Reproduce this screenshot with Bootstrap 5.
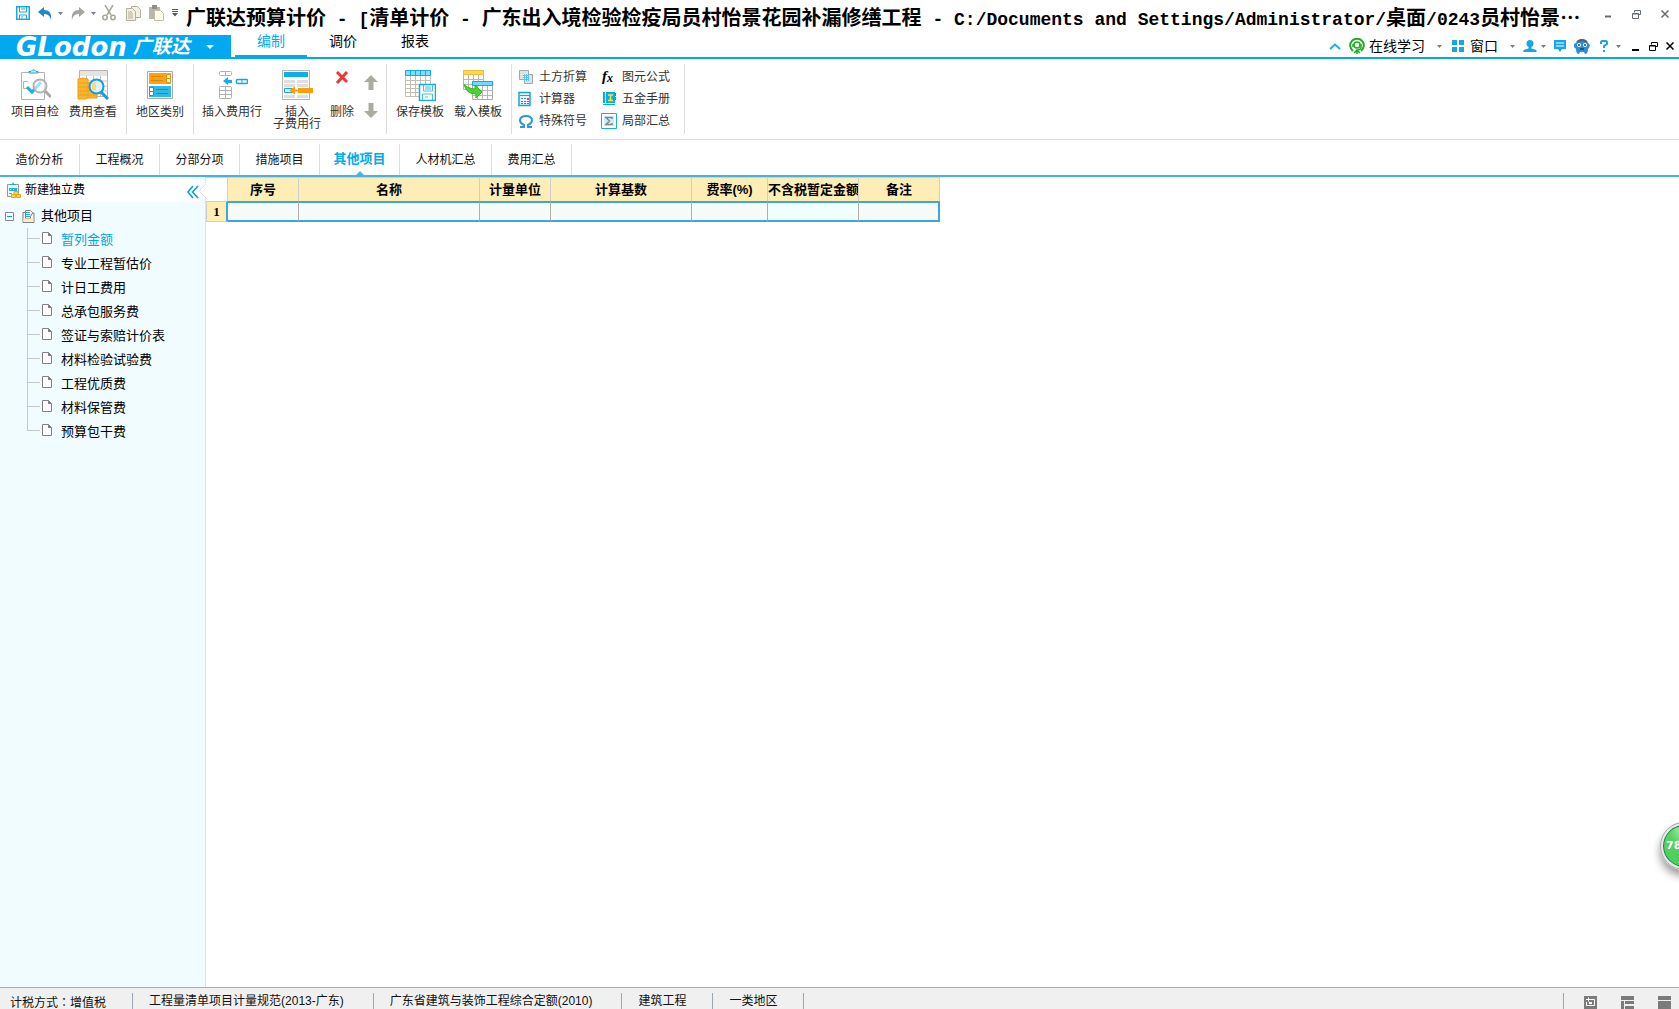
<!DOCTYPE html>
<html lang="zh-CN">
<head>
<meta charset="utf-8">
<meta name="viewport" content="width=device-width, initial-scale=1">
<title>广联达预算计价</title>
<link href="https://cdn.jsdelivr.net/npm/bootstrap@5.3.0/dist/css/bootstrap.min.css" rel="stylesheet">
<style>
:root{--sky:#03a9f0;--line:#dedede}
body{font-family:"Liberation Sans","Noto Sans CJK SC",sans-serif;font-size:12px;line-height:16px;color:#000;background:#fff;overflow:hidden}
svg{display:block;flex:none}
button{font:inherit;color:inherit;background:none;border:0;padding:0;flex:none}
a{color:inherit;text-decoration:none}
.sp-6{margin-left:6px}.sp-10{margin-left:10px}.sp-12{margin-left:12px}
/* title bar */
.titlebar{height:35px;padding:0 10px 0 16px}
.quick{width:170px;height:26px}
.caption-text{font:bold 20px/34px "Liberation Mono","Noto Sans CJK SC",monospace;white-space:nowrap}
.caption-text span{font-size:18px}
.caption-text .dots{font-family:"Noto Sans CJK SC",sans-serif;font-size:20px}
.winbtns{color:#666b75;height:28px;gap:20px}
/* brand and main tabs */
.brandrow{height:24px;border-bottom:2px solid var(--sky)}
.brand{width:231px;height:24px;background:var(--sky);color:#fff;padding-left:16px}
.brand-latin{font:italic bold 26px/24px "DejaVu Sans",sans-serif}
.brand-cn{font-size:19px;line-height:24px;font-style:italic;font-weight:700;margin-left:6px}
.maintabs{margin-left:4px;height:22px}
.maintabs a{width:72px;height:22px;font-size:14px;line-height:12px;text-align:center;border-bottom:2px solid transparent}
.maintabs a.active{color:var(--sky);border-color:var(--sky)}
.tools{font-size:14px;padding-right:5px;height:22px}
/* ribbon */
.ribbon{height:81px;padding-top:5px;border-bottom:1px solid var(--line);color:#333}
.rgroup{height:70px;border-right:1px solid var(--line);padding:0 4px}
.rgroup.lead-in{padding-left:6px}
.rgroup.tight{padding:0 2px}
.rbtn{width:58px;padding-top:5px;display:flex;flex-direction:column;align-items:center;line-height:12px;gap:5px;white-space:nowrap}
.rbtn.wide{width:72px}.rbtn.slim{width:32px}
.arrows{width:26px;padding-top:11px;gap:13px}
.minis{grid-template-columns:83px 72px;grid-auto-rows:22px;padding:2px 4px 0 6px;width:173px}
.minis button{display:flex;align-items:center;gap:5px;text-align:left}
/* page tabs */
.pagetabs{height:37px;padding-top:4px;border-bottom:2px solid #45b4e2}
.pagetabs a{width:80px;height:31px;line-height:33px;text-align:center;border-right:1px solid var(--line);position:relative;color:#111}
.pagetabs a.long{width:92px}
.pagetabs a.active{color:var(--sky);font-weight:700;font-size:13px;line-height:30px}
.pagetabs a.active::after{content:"";position:absolute;left:36px;bottom:0;border:4px solid transparent;border-top:0;border-bottom-color:#45b4e2}
/* side panel */
.side{width:206px;background:#f0fcff;border-right:1px solid #dbe3e5;position:relative}
.sidehead{height:25px;background:#fff;margin-right:5px;padding:0 1px 0 6px}
.notch{position:absolute;right:-1px;top:6px}
.tree{font-size:13px;line-height:24px;list-style:none;margin:0;padding:0}
.root{height:24px;margin-top:2px;padding-left:5px}
.leaves{list-style:none;margin:0 0 0 27px;padding:0}
.leaves li{height:24px;display:flex;align-items:center;background:linear-gradient(#c8c8c8,#c8c8c8) 0 0/1px 100% no-repeat,linear-gradient(#c8c8c8,#c8c8c8) 0 10px/13px 1px no-repeat}
.leaves li:last-child{background-size:1px 10px,13px 1px}
.leaves svg{margin:0 9px 4px 15px}
.leaves .active{color:#00a5dc}
/* data grid */
.datagrid{table-layout:fixed;width:734px;border-collapse:separate;border-spacing:0;font-size:13px}
.datagrid th,.datagrid td{padding:0;text-align:center;white-space:nowrap;overflow:hidden;line-height:20px}
.datagrid thead th{height:24px;background:#ffedb6;border-top:1px solid #cfcfcf;border-right:1px solid #cfcfcf;color:#000}
.datagrid thead td{border-top:1px solid #cfcfcf;border-right:1px solid #cfcfcf}
.datagrid tbody td{height:21px;background:#f6fbfa;border-top:2px solid #3ba9d3;border-bottom:2px solid #3ba9d3;border-right:1px solid #adadad}
.datagrid tbody td:last-child{border-right:2px solid #3ba9d3}
.datagrid tbody td.hot{background:#f1fffc}
.datagrid tbody th{height:21px;line-height:16px;background:#ffedb6;border:1px solid #cfcfcf;border-right:2px solid #3ba9d3;font-family:"Liberation Serif",serif}
/* status bar */
.status{height:22px;background:#f0f0f0;border-top:1px solid #ababab;color:#111}
.status .cell{border-right:1px solid #9aa7b3;height:16px;margin-top:5px;line-height:17px;padding:0 26px 0 16px;white-space:nowrap}
.status .first{padding-left:10px}
.status .norm{padding-right:29px}
.colon{font-family:"Noto Sans CJK TC",sans-serif}
.ball{position:absolute;right:-29px;top:822px;width:48px;height:48px;border-radius:50%;border:3px solid #e8e8e8;outline:1px solid #aaa;outline-offset:-1px;background:radial-gradient(circle at 50% 10%,#b5f0b0 0,#58d060 35%,#48cc5c 100%);box-shadow:0 6px 9px rgba(0,0,0,.4),inset 0 0 0 1px #16804a;color:#fff;font:bold 11px/40px "DejaVu Sans",sans-serif;text-align:left;padding-left:3px}
</style>
<script src="https://cdn.jsdelivr.net/npm/bootstrap@5.3.0/dist/js/bootstrap.bundle.min.js"></script>
</head>
<body>
<svg width="0" height="0" class="position-absolute" aria-hidden="true">
  <symbol id="caret" viewBox="0 0 5 3"><path d="M0 0h5L2.500 3z" fill="#777b88"/></symbol>
  <symbol id="page" viewBox="0 0 10 12"><path d="M.5.5h6l3 3v8h-9z" fill="#fff" stroke="#808080"/><path d="M6 0v4h4z" fill="#808080"/></symbol>
  <symbol id="restore" viewBox="0 0 9 9"><path d="M2.500 2.500v-2h6v4h-2M.5 3.500h6v5h-6zM.5 4h6" fill="none" stroke="currentColor"/></symbol>
  <symbol id="cross" viewBox="0 0 8 8"><path d="M.5.5l7 7M7.500.5l-7 7" stroke="currentColor" stroke-width="1.500"/></symbol>
  <symbol id="arrow" viewBox="0 0 14 15"><path d="M7 0l7 7H9.500v8h-5V7H0z" fill="#acab9f"/></symbol>
  <symbol id="floppy" viewBox="0 0 14 14"><path d="M.75.75h12.500v12.500H.75z" fill="#fff" stroke="#19a7dd" stroke-width="1.500"/><path d="M3.500 1v5h7V1M3.500 13V9h7v4M5 3h4M5 11h2" fill="none" stroke="#19a7dd"/></symbol>
</svg>
<div class="d-flex flex-column vh-100 position-relative overflow-hidden">
  <header>
    <div class="titlebar d-flex align-items-start">
      <div class="quick d-flex align-items-center flex-shrink-0">
        <button aria-label="保存"><svg width="14" height="14"><use href="#floppy"/></svg></button>
        <button class="ms-2" aria-label="撤销"><svg width="14" height="13" viewBox="0 0 14 13"><path d="M0 5l6-5v3c5 0 8 3 7 10-1-4-3-6-7-6v3z" fill="#2187c8"/></svg></button>
        <button class="sp-6" aria-label="撤销列表"><svg width="5" height="3"><use href="#caret"/></svg></button>
        <button class="ms-2" aria-label="重做"><svg width="14" height="13" viewBox="0 0 14 13"><path d="M14 5L8 0v3C3 3 0 6 1 13c1-4 3-6 7-6v3z" fill="#a4a4a0"/></svg></button>
        <button class="sp-6" aria-label="重做列表"><svg width="5" height="3"><use href="#caret"/></svg></button>
        <button class="sp-6" aria-label="剪切"><svg width="14" height="16" viewBox="0 0 14 16" fill="none" stroke="#a9a59b" stroke-width="1.500"><path d="M3 0l6 10M11 0L5 10"/><circle cx="3" cy="12.500" r="2.200"/><circle cx="11" cy="12.500" r="2.200"/></svg></button>
        <button class="sp-10" aria-label="复制"><svg width="15" height="15" viewBox="0 0 15 15" fill="#f3f0df" stroke="#b5b09c"><path d="M5.500.5h6l3 3v8h-9z"/><path d="M.5 2.500h6l3 3v9h-9z"/><path d="M2 6h4M2 8h5M2 10h5M2 12h5"/></svg></button>
        <button class="ms-2" aria-label="粘贴"><svg width="15" height="16" viewBox="0 0 15 16"><path d="M0 2h11v12H0z" fill="#b9b6aa"/><path d="M3 0h5v4H3z" fill="#918f85"/><path d="M5.500 5.500h6l3 3v7h-9z" fill="#fffdeb" stroke="#c4bfa5"/></svg></button>
        <button class="ms-2" aria-label="更多"><svg width="6" height="8" viewBox="0 0 6 8"><path d="M0 0h6v1H0zM0 2h6v1H0zM0 4h6L3 7.500z" fill="#555a66"/></svg></button>
      </div>
      <div class="caption-text">广联达预算计价<span> - [</span>清单计价<span> - </span>广东出入境检验检疫局员村怡景花园补漏修缮工程<span> - C:/Documents and Settings/Administrator/</span>桌面<span>/0243</span>员村怡景<span class="dots">…</span></div>
      <div class="winbtns d-flex align-items-center ms-auto">
        <button aria-label="最小化"><svg width="8" height="8" viewBox="0 0 8 8"><path d="M1 5.500h6v2H1z" fill="currentColor"/></svg></button>
        <button aria-label="还原"><svg width="9" height="9"><use href="#restore"/></svg></button>
        <button aria-label="关闭"><svg width="8" height="8"><use href="#cross"/></svg></button>
      </div>
    </div>
    <div class="brandrow d-flex">
      <button class="brand d-flex"><span class="brand-latin">GLodon</span><span class="brand-cn">广联达</span><svg class="ms-3 mt-2" width="8" height="8" viewBox="0 0 8 8"><path d="M0 2h8L4 6z" fill="#fff"/></svg></button>
      <nav class="maintabs d-flex"><a href="#" class="active">编制</a><a href="#">调价</a><a href="#">报表</a></nav>
      <div class="tools d-flex align-items-center ms-auto">
        <button aria-label="收起"><svg width="12" height="7" viewBox="0 0 12 7"><path d="M1 6l5-4.500L11 6" fill="none" stroke="#16aef0" stroke-width="2"/></svg></button>
        <button class="d-flex align-items-center ms-2"><svg width="16" height="16" viewBox="0 0 16 16" fill="none" stroke="#20ac23"><path d="M4 13A6.800 6.800 0 1 1 12 13" stroke-width="2"/><circle cx="8" cy="7" r="3" stroke-width="1.500"/><path d="M4 6v3M12 6v3c0 3-2 3-4 3v4M5 15l3-3 3 3" stroke-width="1.500"/></svg><span class="ms-1">在线学习</span><svg class="sp-12" width="5" height="3"><use href="#caret"/></svg></button>
        <button class="d-flex align-items-center sp-10"><svg width="12" height="12" viewBox="0 0 12 12"><path d="M0 0h5v5H0zM7 0h5v5H7zM0 7h5v5H0zM7 7h5v5H7z" fill="#16a4ea"/></svg><span class="sp-6">窗口</span><svg class="sp-12" width="5" height="3"><use href="#caret"/></svg></button>
        <button class="d-flex align-items-center ms-2" aria-label="用户"><svg width="14" height="12" viewBox="0 0 14 12" fill="#16a4ea"><circle cx="7" cy="3.500" r="3.500"/><path d="M5.500 6h3v2.500L13.500 10v2H.5v-2l5-1.500z"/></svg><svg class="ms-1" width="5" height="3"><use href="#caret"/></svg></button>
        <button class="ms-2" aria-label="消息"><svg width="12" height="12" viewBox="0 0 12 12"><path d="M0 0h12v9H8l-2 3-2-3H0z" fill="#16a4ea"/><path d="M2 3h8M2 6h8" stroke="#fff"/></svg></button>
        <button class="ms-2" aria-label="助手"><svg width="16" height="15" viewBox="0 0 16 15"><path d="M2 4Q4 0 8 0t6 4l2 2-1 3-1 1q0 5-3 5l-1-2H6l-1 2q-3 0-3-5L0 8V5z" fill="#288fdb"/><path d="M3 3q5-4 10 0" fill="none" stroke="#575c76" stroke-width="2"/><circle cx="5" cy="6" r="2" fill="#fff"/><circle cx="11" cy="6" r="2" fill="#fff"/><path d="M5 5v2M11 5v2M6 10h4" stroke="#25436a" stroke-width="1.500"/></svg></button>
        <button class="sp-10" aria-label="帮助"><svg width="8" height="12" viewBox="0 0 8 12"><path d="M1 4V2l1-1h4l1 1v2L4 6v2M4 10v2" fill="none" stroke="#16a4ea" stroke-width="2"/></svg></button>
        <button class="ms-2" aria-label="帮助列表"><svg width="5" height="3"><use href="#caret"/></svg></button>
        <button class="sp-10" aria-label="最小化窗口"><svg width="8" height="9" viewBox="0 0 8 9"><path d="M1 7h7v2H1z"/></svg></button>
        <button class="sp-10" aria-label="还原窗口"><svg width="9" height="9"><use href="#restore"/></svg></button>
        <button class="ms-2" aria-label="关闭窗口"><svg width="8" height="8"><use href="#cross"/></svg></button>
      </div>
    </div>
  </header>

  <div class="ribbon d-flex">
    <div class="rgroup lead-in d-flex">
      <button class="rbtn"><svg width="32" height="32" viewBox="0 0 32 32" fill="none"><path d="M2.500 3.500h23v27h-23z" fill="#fff" stroke="#b3b3b3"/><path d="M10 4h9V2.500h-2L15.500 1h-2L12 2.500h-2z" fill="#d5f3fd" stroke="#12a9df"/><path d="M9 12.500H4.500v7H9" stroke="#b3b3b3"/><path d="M8 18l5 5 9-10" stroke="#13aeee" stroke-width="3"/><circle cx="21" cy="17" r="6.500" fill="#fff" fill-opacity=".6" stroke="#b0b0b5" stroke-width="2"/><path d="M26 22l6 6" stroke="#a7a7ac" stroke-width="3"/></svg><span>项目自检</span></button>
      <button class="rbtn"><svg width="32" height="32" viewBox="0 0 32 32" fill="none"><path d="M2.500 1.500h28v26h-28z" fill="#fff" stroke="#b3b3b3"/><path d="M3 2h27v5H3z" fill="#e4e4e4"/><path d="M3 12h27M3 17h27M3 22h27M9.500 7v20M16.500 7v20M23.500 7v20" stroke="#c4c4c4"/><path d="M1 10l5-1 5 1v4l5-1 4 1v15H11l-3 1H1z" fill="#fdb52b" stroke="#ef9b12"/><path d="M1 14h10M1 18h19M1 22h19M1 26h19M11 14v15" stroke="#eda01f"/><circle cx="19.500" cy="17.500" r="7" fill="#ddf4fc" stroke="#139fdd" stroke-width="2"/><path d="M15 14l4-1v9l-4-1z" fill="#ffd68a"/><path d="M24 23l7 7" stroke="#139fdd" stroke-width="3"/></svg><span>费用查看</span></button>
    </div>
    <div class="rgroup d-flex">
      <button class="rbtn"><svg width="32" height="32" viewBox="0 0 32 32"><path d="M3.500 2.500h25v27h-25z" fill="#fff" stroke="#aaa"/><path d="M5 4h22v11H5z" fill="#ffa00c"/><path d="M7 7.500h12M7 11.500h12" stroke="#d9870b"/><path d="M22.500 5.500h4v4h-4zM22.500 9.500h4v4h-4z" fill="#fff" stroke="#e99208"/><path d="M5 17h22v11H5z" fill="#2fb9e7"/><path d="M12 20.500h12M12 24.500h12" stroke="#1792bd"/><path d="M5.500 18.500h4v4h-4zM5.500 22.500h4v4h-4z" fill="#fff" stroke="#159bce"/></svg><span>地区类别</span></button>
    </div>
    <div class="rgroup tight d-flex">
      <button class="rbtn wide"><svg width="32" height="32" viewBox="0 0 32 32" fill="#fff" stroke="#b0b0b0"><rect x="3.500" y="2.500" width="12" height="4" rx="1"/><path d="M9.500 2.500v4"/><rect x="3.500" y="17.500" width="12" height="12" rx="1"/><path d="M9.500 17.500v12M3.500 21.500h12M3.500 25.500h12"/><path d="M7 12l5-4v3h4v3h-4v2z" fill="#11aef0" stroke="none"/><rect x="20.500" y="10.500" width="11" height="4" rx="1" stroke="#0baae8" stroke-width="1.500"/><path d="M26 10.500v4" stroke="#0baae8"/></svg><span>插入费用行</span></button>
      <button class="rbtn"><svg width="32" height="32" viewBox="0 0 32 32"><path d="M1.500 1.500h27v29h-27z" fill="#fff" stroke="#b3b3b3"/><path d="M3 3h24v5H3z" fill="#08afe9"/><path d="M3 11h11v3H3zM16 11h11v3H16zM3 15h11v3H3zM16 15h11v3H16zM3 26h11v3H3zM16 26h11v3H16z" fill="#dedede"/><path d="M3.500 19.500h8v4h-8z" fill="#d9f5ff" stroke="#12a7dd"/><path d="M8 21.500l6-4v3h4v2h-4v3zM17 19h15v5H17z" fill="#ff9e08"/></svg><span>插入<br>子费用行</span></button>
      <button class="rbtn slim"><svg width="14" height="32" viewBox="0 0 14 32"><path d="M2 3l10 10M12 3L2 14" stroke="#ee3737" stroke-width="3"/></svg><span>删除</span></button>
      <div class="arrows d-flex flex-column align-items-center"><button aria-label="上移"><svg width="14" height="15"><use href="#arrow"/></svg></button><button aria-label="下移"><svg width="14" height="15" viewBox="0 0 14 15"><path d="M7 15l7-7H9.500V0h-5v8H0z" fill="#acab9f"/></svg></button></div>
    </div>
    <div class="rgroup d-flex">
      <button class="rbtn"><svg width="32" height="32" viewBox="0 0 32 32" fill="none"><path d="M1.500 1.500h25v26h-25z" fill="#fff" stroke="#c5beb2"/><path d="M1 1h26v6H1z" fill="#89dcfa"/><path d="M1.500 1.500h25v5h-25zM6.500 2v5M11.500 2v5M16.500 2v5M21.500 2v5" stroke="#0aafe7"/><path d="M6.500 7v20M11.500 7v20M16.500 7v20M21.500 7v20M1 11.500h25M1 15.500h25M1 19.500h25M1 23.500h25" stroke="#c5beb2"/><path d="M15.500 15.500h16v16h-16z" fill="#fff" stroke="#0aafe7" stroke-width="1.500"/><path d="M19.500 16v6h9v-6M18.500 31v-6h10v6M21 18h6M21 20h6M21 28h3" stroke="#4dbce3"/></svg><span>保存模板</span></button>
      <button class="rbtn"><svg width="32" height="32" viewBox="0 0 32 32" fill="none"><path d="M1.500 1.500h20v19h-20z" fill="#fff" stroke="#b5b5b5"/><path d="M1.500 1.500h20v4h-20z" fill="#ffd75a" stroke="#f2bd33"/><path d="M6.500 6v14M11.500 6v14M16.500 6v14M2 10.500h19M2 15.500h19" stroke="#b5b5b5"/><path d="M10.500 12.500h20v18h-20z" fill="#fff" stroke="#aaa"/><path d="M10.500 12.500h20v4h-20z" fill="#6ddafa" stroke="#0aafe7"/><path d="M15.500 17v13M20.500 17v13M25.500 17v13M11 21.500h19M11 26.500h19" stroke="#b5b5b5"/><path d="M2 15q2 4 11 5v-4l7 7-6 6v-4Q4 25 2 15z" fill="#4bd331" stroke="#37b324"/></svg><span>载入模板</span></button>
    </div>
    <div class="rgroup minis d-grid">
      <button><svg width="16" height="16" viewBox="0 0 16 16"><path d="M1.500 1.500h9v9h-9z" fill="#e2e2e2" stroke="#a5a5a5"/><path d="M6.500 5.500h8v9h-8z" fill="#e2e2e2" stroke="#a5a5a5"/><path d="M5 5h6v7H5z" fill="#4fc4ee"/><path d="M5 5.500h6M5 7.500h6M5 9.500h6M5 11.500h6" stroke="#fff" stroke-dasharray="1 1"/></svg><span>土方折算</span></button>
      <button><svg width="16" height="16" viewBox="0 0 16 16"><text x="1" y="12" font-family="Liberation Serif" font-style="italic" font-weight="bold" font-size="15">f</text><text x="6" y="13" font-family="Liberation Serif" font-style="italic" font-weight="bold" font-size="12">x</text></svg><span>图元公式</span></button>
      <button><svg width="16" height="16" viewBox="0 0 16 16"><path d="M1 1.500h11v13H1z" fill="#e9f8fe" stroke="#13a7df" stroke-width="1.500"/><path d="M2 4.500h10" stroke="#13a7df"/><path d="M3 7.500h8M3 10.500h8M3 12.500h8" stroke="#487fa5" stroke-dasharray="2 1"/><path d="M9 7h2v2H9z" fill="#e44"/></svg><span>计算器</span></button>
      <button><svg width="16" height="16" viewBox="0 0 16 16"><path d="M2 1h12v13H2z" fill="#04aeee"/><path d="M4.500 1v11M2 12.500h12" stroke="#fff"/><path d="M7 4h5M9.500 4v5M7 9.500h5" stroke="#ffe33a" stroke-width="1.500"/><path d="M14 2h1v3h-1z" fill="#e33"/><path d="M14 6h1v3h-1z" fill="#35a02f"/></svg><span>五金手册</span></button>
      <button><svg width="16" height="16" viewBox="0 0 16 16"><path d="M2 14h4v-2Q2 10 2 7.500 2 3 8 3t6 4.500q0 2.500-4 4.500v2h4" fill="none" stroke="#2a9bd8" stroke-width="2"/></svg><span>特殊符号</span></button>
      <button><svg width="16" height="16" viewBox="0 0 16 16"><path d="M.5.5h15v15H.5z" fill="#fff" stroke="#15aee6"/><path d="M3 3h10v10H3z" fill="#c9eef8"/><path d="M11 6V4.500H5L8.500 8 5 11.500h6V10" fill="none" stroke="#888" stroke-width="1.500"/></svg><span>局部汇总</span></button>
    </div>
  </div>

  <nav class="pagetabs d-flex"><a href="#">造价分析</a><a href="#">工程概况</a><a href="#">分部分项</a><a href="#">措施项目</a><a href="#" class="active">其他项目</a><a href="#" class="long">人材机汇总</a><a href="#">费用汇总</a></nav>

  <main class="d-flex flex-grow-1">
    <aside class="side flex-shrink-0">
      <div class="sidehead d-flex align-items-center">
        <button class="d-flex align-items-center gap-1"><svg width="15" height="16" viewBox="0 0 15 16"><path d="M1.500 2.500h11v12h-11z" fill="#f2fbff" stroke="#8b9ba5"/><path d="M4 3V2h2l1-2 1 2h2v1z" fill="#13aeea"/><path d="M3 6h8v3H3z" fill="#22b0e8"/><path d="M4 7.500h1M7 7.500h1" stroke="#fff"/><path d="M3 11.500h3" stroke="#22b0e8"/><path d="M8 9.500h4v3H8zM5.500 12.500h4v3h-4zM10.500 12.500h4v3h-4z" fill="#ffd343" stroke="#eaa817"/></svg><span>新建独立费</span></button>
        <button class="ms-auto mt-1" aria-label="折叠"><svg width="12" height="14" viewBox="0 0 12 14"><path d="M6 1L1 7l5 6M11 1L5.500 7l5.500 6" fill="none" stroke="#0b9bd0" stroke-width="1.500"/></svg></button>
      </div>
      <svg class="notch" width="7" height="16" viewBox="0 0 7 16"><path d="M7 0v16L1 10V6z" fill="#fff"/><path d="M7 1L1 7v2l6 6" fill="none" stroke="#ddd"/></svg>
      <ul class="tree">
        <li>
          <div class="root d-flex align-items-center"><svg width="9" height="9" viewBox="0 0 9 9"><path d="M.5.5h8v8h-8z" fill="#fff" stroke="#7e8c90"/><path d="M2 4.500h5" stroke="#009cd0"/></svg><svg class="ms-2" width="13" height="13" viewBox="0 0 13 13"><path d="M3.500.5h5l2 2v7h-7z" fill="#fff" stroke="#7e7e7e"/><path d="M1 2.500h2.500v6h5v-2l2-3.500H12v9.500H1z" fill="#f4f4f4" stroke="#7e7e7e"/><path d="M1.500 8.500h10v3h-10z" fill="#ffedb6"/><path d="M4 2.500h4M4 4.500h4M4 6.500h4" stroke="#1ca6d6"/></svg><span class="sp-6">其他项目</span></div>
          <ul class="leaves">
            <li class="active"><svg width="10" height="12"><use href="#page"/></svg>暂列金额</li>
            <li><svg width="10" height="12"><use href="#page"/></svg>专业工程暂估价</li>
            <li><svg width="10" height="12"><use href="#page"/></svg>计日工费用</li>
            <li><svg width="10" height="12"><use href="#page"/></svg>总承包服务费</li>
            <li><svg width="10" height="12"><use href="#page"/></svg>签证与索赔计价表</li>
            <li><svg width="10" height="12"><use href="#page"/></svg>材料检验试验费</li>
            <li><svg width="10" height="12"><use href="#page"/></svg>工程优质费</li>
            <li><svg width="10" height="12"><use href="#page"/></svg>材料保管费</li>
            <li><svg width="10" height="12"><use href="#page"/></svg>预算包干费</li>
          </ul>
        </li>
      </ul>
    </aside>
    <section class="flex-grow-1">
      <table class="datagrid">
        <colgroup><col style="width:22px"><col style="width:71px"><col style="width:181px"><col style="width:71px"><col style="width:141px"><col style="width:76px"><col style="width:91px"><col style="width:81px"></colgroup>
        <thead><tr><td></td><th scope="col">序号</th><th scope="col">名称</th><th scope="col">计量单位</th><th scope="col">计算基数</th><th scope="col">费率(%)</th><th scope="col">不含税暂定金额</th><th scope="col">备注</th></tr></thead>
        <tbody><tr><th scope="row">1</th><td></td><td></td><td></td><td></td><td></td><td class="hot"></td><td></td></tr></tbody>
      </table>
    </section>
  </main>

  <footer class="status d-flex flex-shrink-0">
    <div class="cell first">计税方式<span class="colon" lang="zh-TW">：</span>增值税</div>
    <div class="cell norm">工程量清单项目计量规范(2013-广东)</div>
    <div class="cell norm">广东省建筑与装饰工程综合定额(2010)</div>
    <div class="cell">建筑工程</div>
    <div class="cell">一类地区</div>
    <div class="cell ms-auto p-0"></div>
    <div class="d-flex mt-2 ps-3 pe-2 gap-4">
      <button class="ms-1" aria-label="视图一"><svg width="13" height="13" viewBox="0 0 13 13"><path d="M0 0h13v13H0z" fill="#7b7b7b"/><path d="M2 3.500h8.500v6h-8V6M4.500 1.500v4" fill="none" stroke="#fff"/><path d="M5 6h3v2H5z" fill="#fff"/></svg></button>
      <button aria-label="视图二"><svg width="13" height="13" viewBox="0 0 13 13"><path d="M0 0h13v4H0zM0 5h3v8H0zM4 5h9v3H4zM4 10h9v3H4z" fill="#7b7b7b"/></svg></button>
      <button aria-label="视图三"><svg width="13" height="13" viewBox="0 0 13 13"><path d="M0 0h13v4H0zM0 5h13v8H0z" fill="#7b7b7b"/></svg></button>
    </div>
  </footer>
  <button class="ball">78</button>
</div>
</body>
</html>
